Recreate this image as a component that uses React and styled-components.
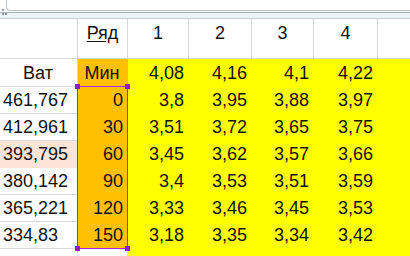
import React from 'react'
import styled, { createGlobalStyle } from 'styled-components'

const GlobalStyle = createGlobalStyle`
  html, body {
    margin: 0;
    padding: 0;
    background: #fff;
  }
  body {
    font-family: "Liberation Sans", Arial, sans-serif;
  }
`;

const FILLS = {
  none: '#ffffff',
  yellow: '#ffff00',
  orange: '#ffc000',
  peach: '#fce4d6',
};

const Window = styled.div`
  width: 410px;
  height: 256px;
  overflow: hidden;
  background: #fff;
  display: flex;
  flex-direction: column;
`;

const FormulaStrip = styled.div`
  flex: none;
  height: 13px;
  box-sizing: border-box;
  border-bottom: 1px solid #a3aeb7;
  display: flex;
  position: relative;
`;

const FormulaBox = styled.div`
  margin-left: 6px;
  flex: 1;
  border-left: 1px solid #b7c1c8;
  border-bottom: 1px solid #b7c1c8;
  border-bottom-left-radius: 4px;
  margin-bottom: 1px;
`;

const Grip = styled.svg`
  position: absolute;
  left: 2px;
  top: 9px;
`;

const HeaderBand = styled.div`
  flex: none;
  height: 6px;
  box-sizing: border-box;
  background: #eaf4f6;
  border-bottom: 1px solid #c4ccd2;
`;

const Sheet = styled.div`
  flex: none;
  position: relative;
  display: grid;
  grid-template-columns: 78px 50px 61px 63px 62px 64px 33px;
  grid-template-rows: 40px 28px repeat(6, 27px) 12px;
  font-size: 18px;
  color: #111;
`;

const Cell = styled.div`
  box-sizing: border-box;
  display: flex;
  align-items: center;
  justify-content: ${p => (p.$align === 'left' ? 'flex-start' : p.$align === 'center' ? 'center' : 'flex-end')};
  padding: ${p => (p.$head ? '0 0 10px 0' : '1px 4px 0 3px')};
  background: ${p => FILLS[p.$fill || 'none']};
  border-right: 1px solid ${p => (p.$fill && p.$fill !== 'none' ? FILLS[p.$fill] : '#d9d9d9')};
  border-bottom: 1px solid ${p => (p.$fill && p.$fill !== 'none' ? FILLS[p.$fill] : '#d9d9d9')};
  white-space: nowrap;
`;

const Underlined = styled.span`
  text-decoration: underline;
  text-underline-offset: 2px;
`;

const Selection = styled.div`
  position: absolute;
  grid-column: 2 / 3;
  grid-row: 3 / 9;
  top: -1px;
  left: -1px;
  right: 0;
  bottom: 0;
  border: 1.5px solid #a327e6;
  z-index: 1;
  pointer-events: none;
`;

const Handle = styled.span`
  position: absolute;
  width: 5px;
  height: 5px;
  background: #9417d6;
  ${p => (p.$top ? 'top: -3px;' : 'bottom: -3px;')}
  ${p => (p.$left ? 'left: -3px;' : 'right: -3px;')}
`;

const header = ['', 'Ряд', '1', '2', '3', '4', ''];
const firstRow = ['Ват', 'Мин', '4,08', '4,16', '4,1', '4,22', ''];
const rows = [
  ['461,767', '0', '3,8', '3,95', '3,88', '3,97'],
  ['412,961', '30', '3,51', '3,72', '3,65', '3,75'],
  ['393,795', '60', '3,45', '3,62', '3,57', '3,66'],
  ['380,142', '90', '3,4', '3,53', '3,51', '3,59'],
  ['365,221', '120', '3,33', '3,46', '3,45', '3,53'],
  ['334,83', '150', '3,18', '3,35', '3,34', '3,42'],
];

export default function App() {
  return (
    <Window>
      <GlobalStyle />
      <FormulaStrip>
        <FormulaBox />
        <Grip width="6" height="6" viewBox="0 0 6 6">
          <rect x="0" y="0" width="2" height="2" fill="#8b97a0" />
          <rect x="0" y="4" width="2" height="2" fill="#8b97a0" />
          <rect x="3" y="4" width="2" height="2" fill="#8b97a0" />
        </Grip>
      </FormulaStrip>
      <HeaderBand />
      <Sheet>
        {header.map((h, i) => (
          <Cell key={'h' + i} $head $align="center">
            {i === 1 ? <Underlined>{h}</Underlined> : h}
          </Cell>
        ))}

        {firstRow.map((v, i) => (
          <Cell
            key={'f' + i}
            $align={i < 2 ? 'center' : 'right'}
            $fill={i === 0 ? 'none' : i === 1 ? 'orange' : 'yellow'}
          >
            {v}
          </Cell>
        ))}

        {rows.map((r, ri) => (
          <React.Fragment key={'r' + ri}>
            <Cell $align="left" $fill={ri === 2 ? 'peach' : 'none'}>{r[0]}</Cell>
            <Cell $fill="orange">{r[1]}</Cell>
            {r.slice(2).map((v, ci) => (
              <Cell key={ci} $fill="yellow">{v}</Cell>
            ))}
            <Cell $fill="yellow" />
          </React.Fragment>
        ))}

        <Cell />
        <Cell />
        {[0, 1, 2, 3, 4].map(i => (
          <Cell key={'t' + i} $fill="yellow" />
        ))}

        <Selection>
          <Handle $top $left />
          <Handle $top />
          <Handle $left />
          <Handle />
        </Selection>
      </Sheet>
    </Window>
  )
}
